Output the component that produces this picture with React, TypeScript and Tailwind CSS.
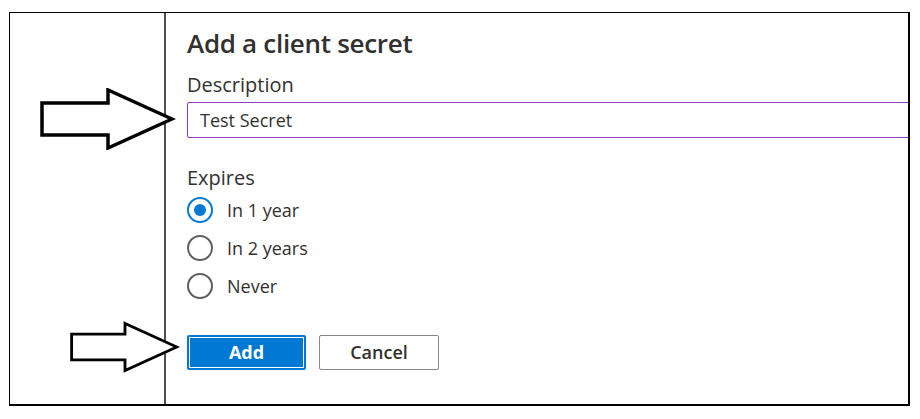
import React from "react";

function Arrow({ className }: { className: string }) {
  return (
    <svg className={className} viewBox="0 0 136 62" fill="white" stroke="black" strokeWidth="3.5" strokeLinejoin="miter">
      <path d="M2 15 H68 V2 L132 31 L68 60 V47 H2 Z" />
    </svg>
  );
}

function Radio({ label, checked }: { label: string; checked?: boolean }) {
  return (
    <div className="flex items-center h-[38px]">
      <span
        className={`flex items-center justify-center w-[26px] h-[26px] rounded-full border-2 ${
          checked ? "border-[#0078d4]" : "border-[#605e5c]"
        }`}
      >
        {checked && <span className="w-[12px] h-[12px] rounded-full bg-[#0078d4]" />}
      </span>
      <span className="ml-[14px] text-[18px] text-[#323130]">{label}</span>
    </div>
  );
}

export default function App() {
  return (
    <div className="w-[920px] h-[419px] bg-white pl-[9px] pt-[12px] relative" style={{ fontFamily: '"Open Sans", "Noto Sans", sans-serif' }}>
      <div className="w-[901px] h-[394px] border border-black border-r-2 border-b-2 flex overflow-hidden">
        {/* left gutter + divider */}
        <div className="w-[156px] shrink-0 border-r-2 border-[#505050]" />
        <div className="flex-1 min-w-0 overflow-hidden pl-[21px] pt-[14px]">
          <h1 className="text-[26px] leading-[32px] font-semibold text-[#323130] tracking-[-0.3px]">Add a client secret</h1>
          <div className="mt-[12px] text-[20px] leading-[28px] text-[#323130]">Description</div>
          <div className="mt-[3px] w-[900px] h-[36px] border border-[#8a3fc0] rounded-[2px] flex items-center pl-[12px] text-[18px] text-[#323130]">
            Test Secret
          </div>
          <div className="mt-[27px] text-[20px] leading-[26px] text-[#323130]">Expires</div>
          <div className="flex flex-col">
            <Radio label="In 1 year" checked />
            <Radio label="In 2 years" />
            <Radio label="Never" />
          </div>
          <div className="mt-[30px] flex gap-[13px]">
            <button className="w-[119px] h-[35px] rounded-[2px] bg-[#0078d4] p-[2px]">
              <span className="flex items-center justify-center w-full h-full border border-white text-white font-bold text-[18px]">Add</span>
            </button>
            <button className="w-[120px] h-[35px] rounded-[2px] border border-[#8a8886] bg-white text-[#323130] font-semibold text-[18px]">
              Cancel
            </button>
          </div>
        </div>
      </div>
      <Arrow className="absolute left-[40px] top-[88px] w-[136px] h-[62px]" />
      <Arrow className="absolute left-[70px] top-[320px] w-[110px] h-[54px]" />
    </div>
  );
}
